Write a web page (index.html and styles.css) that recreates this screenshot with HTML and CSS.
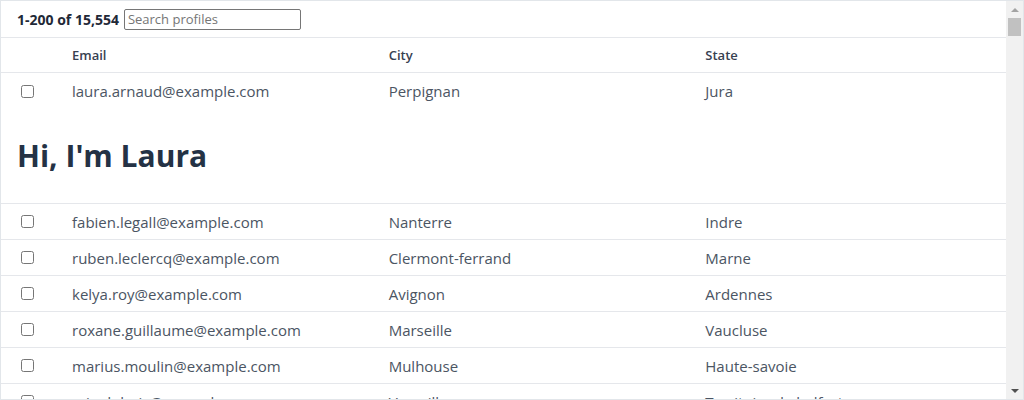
FILE: index.html
```html
<!DOCTYPE html>
<html lang="en">
<head>
<meta charset="utf-8">
<title>Profiles</title>
<link rel="stylesheet" href="styles.css">
</head>
<body>
<div class="panel">
  <div class="viewport">
    <div class="toolbar">
      <span class="count">1-200 of 15,554</span>
      <input class="search" type="text" placeholder="Search profiles">
    </div>
    <table class="grid">
      <colgroup>
        <col class="c-check">
        <col>
        <col>
        <col>
      </colgroup>
      <thead>
        <tr>
          <th></th>
          <th>Email</th>
          <th>City</th>
          <th>State</th>
        </tr>
      </thead>
      <tbody>
        <tr class="open">
          <td class="check"><input type="checkbox"></td>
          <td>laura.arnaud@example.com</td>
          <td>Perpignan</td>
          <td>Jura</td>
        </tr>
        <tr class="detail">
          <td colspan="4"><h1>Hi, I'm Laura</h1></td>
        </tr>
        <tr>
          <td class="check"><input type="checkbox"></td>
          <td>fabien.legall@example.com</td>
          <td>Nanterre</td>
          <td>Indre</td>
        </tr>
        <tr>
          <td class="check"><input type="checkbox"></td>
          <td>ruben.leclercq@example.com</td>
          <td>Clermont-ferrand</td>
          <td>Marne</td>
        </tr>
        <tr>
          <td class="check"><input type="checkbox"></td>
          <td>kelya.roy@example.com</td>
          <td>Avignon</td>
          <td>Ardennes</td>
        </tr>
        <tr>
          <td class="check"><input type="checkbox"></td>
          <td>roxane.guillaume@example.com</td>
          <td>Marseille</td>
          <td>Vaucluse</td>
        </tr>
        <tr>
          <td class="check"><input type="checkbox"></td>
          <td>marius.moulin@example.com</td>
          <td>Mulhouse</td>
          <td>Haute-savoie</td>
        </tr>
        <tr>
          <td class="check"><input type="checkbox"></td>
          <td>mia.dubois@example.com</td>
          <td>Versailles</td>
          <td>Territoire de belfort</td>
        </tr>
      </tbody>
    </table>
  </div>
  <div class="scrollbar" aria-hidden="true">
    <div class="sb-arrow sb-up"></div>
    <div class="sb-thumb"></div>
    <div class="sb-track"></div>
    <div class="sb-arrow sb-down"></div>
  </div>
</div>
</body>
</html>
```
FILE: styles.css
```css
html, body {
  margin: 0;
  padding: 0;
  background: #ffffff;
}

body {
  font-family: "Open Sans", "Noto Sans", Arial, sans-serif;
  color: #4b5563;
}

.panel {
  box-sizing: border-box;
  width: 1024px;
  height: 400px;
  border: 1px solid #e2e6ea;
  display: flex;
  overflow: hidden;
}

.viewport {
  flex: 1;
  min-width: 0;
  overflow: hidden;
}

/* drawn scrollbar */
.scrollbar {
  width: 17px;
  flex: none;
  display: flex;
  flex-direction: column;
  align-items: center;
  background: #f1f1f1;
}

.sb-arrow {
  height: 17px;
  width: 17px;
  flex: none;
  display: flex;
  align-items: center;
  justify-content: center;
}

.sb-arrow::before {
  content: "";
  width: 0;
  height: 0;
  border-left: 4px solid transparent;
  border-right: 4px solid transparent;
}

.sb-up::before {
  border-bottom: 4px solid #a3a3a3;
}

.sb-down::before {
  border-top: 4px solid #505050;
}

.sb-thumb {
  flex: none;
  width: 13px;
  height: 18px;
  background: #c1c1c1;
}

.sb-track {
  flex: 1;
}

.toolbar {
  display: flex;
  align-items: center;
  gap: 5px;
  height: 36px;
  padding: 0 16px;
  border-bottom: 1px solid #e5e7eb;
}

.count {
  font-size: 14px;
  font-weight: 700;
  color: #1f2937;
}

.search {
  box-sizing: border-box;
  width: 177px;
  height: 21px;
  margin: 0;
  padding: 0 3px;
  border: 1px solid #767676;
  border-radius: 2px;
  font-family: "Open Sans", "Noto Sans", Arial, sans-serif;
  font-size: 13px;
}

.search::placeholder {
  color: #757575;
}

.grid {
  width: 100%;
  border-collapse: collapse;
  table-layout: fixed;
}

.c-check {
  width: 55px;
}

.grid th {
  height: 34px;
  padding: 0 16px;
  text-align: left;
  font-size: 13px;
  font-weight: 600;
  color: #374151;
  border-bottom: 1px solid #e5e7eb;
}

.grid td {
  height: 35px;
  padding: 0 16px;
  font-size: 15px;
  color: #4b5563;
  border-bottom: 1px solid #e5e7eb;
  white-space: nowrap;
  overflow: hidden;
}

.grid tr.open td {
  height: 36px;
  border-bottom: none;
}

.grid td.check {
  padding: 0 0 0 16px;
}

.grid td.check input {
  display: block;
  margin: 0 0 0 4px;
  width: 13px;
  height: 13px;
}

.grid tr.detail td {
  height: auto;
  padding: 29px 16px;
}

.detail h1 {
  margin: 0;
  font-size: 30px;
  line-height: 36px;
  font-weight: 700;
  color: #243245;
}
```
